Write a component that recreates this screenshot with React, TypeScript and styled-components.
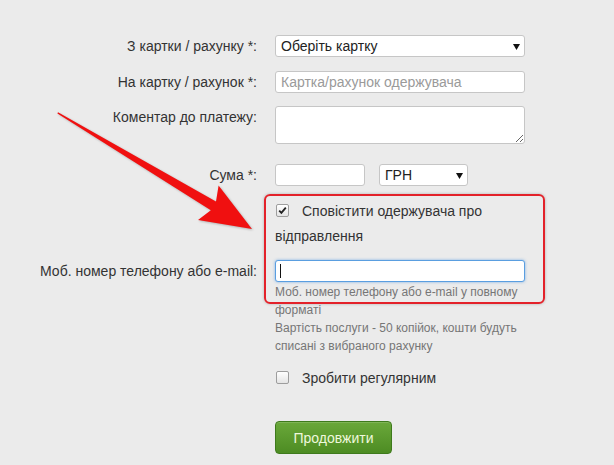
import React from "react";
import styled, { createGlobalStyle } from "styled-components";

const Global = createGlobalStyle`
  html, body { margin: 0; padding: 0; background: #ebebeb; }
  body { font-family: "Liberation Sans", Arial, sans-serif; }
`;

const Page = styled.div`
  position: relative;
  width: 614px;
  height: 465px;
  overflow: hidden;
  background: #ebebeb;
  padding-top: 35px;
  box-sizing: border-box;
  font-family: "Liberation Sans", Arial, sans-serif;
  color: #333;
`;

const Row = styled.div<{ $mt: number }>`
  display: grid;
  grid-template-columns: 257px 250px;
  column-gap: 18px;
  margin-top: ${(p) => p.$mt}px;
`;

const Label = styled.label`
  text-align: right;
  font-size: 14px;
  line-height: 22px;
  color: #333;
  white-space: nowrap;
`;

const Control = styled.div`
  display: flex;
  flex-direction: column;
`;

const Inline = styled.div`
  display: flex;
  gap: 14px;
`;

const SelectWrap = styled.div<{ $w: number }>`
  position: relative;
  width: ${(p) => p.$w}px;
`;

const Select = styled.select`
  appearance: none;
  -webkit-appearance: none;
  width: 100%;
  height: 22px;
  box-sizing: border-box;
  border: 1px solid #c6c6c6;
  border-radius: 3px;
  background: #fff;
  font-family: "Liberation Sans", Arial, sans-serif;
  font-size: 14px;
  color: #222;
  padding: 0 5px;
  outline: none;
`;

const Caret = styled.svg`
  position: absolute;
  right: 5px;
  top: 9px;
  pointer-events: none;
`;

const Input = styled.input<{ $w?: number; $focus?: boolean }>`
  width: ${(p) => (p.$w ? `${p.$w}px` : "100%")};
  height: 22px;
  box-sizing: border-box;
  border: 1px solid ${(p) => (p.$focus ? "#5a9ee0" : "#c6c6c6")};
  border-radius: 3px;
  background: #fff;
  font-family: "Liberation Sans", Arial, sans-serif;
  font-size: 14px;
  color: #222;
  padding: 0 5px;
  outline: none;
  box-shadow: ${(p) => (p.$focus ? "0 0 3px rgba(80,150,225,0.7)" : "none")};
  &::placeholder { color: #9a9a9a; }
`;

const TextArea = styled.textarea`
  width: 250px;
  height: 38px;
  box-sizing: border-box;
  border: 1px solid #c6c6c6;
  border-radius: 3px;
  background: #fff;
  font-family: "Liberation Sans", Arial, sans-serif;
  font-size: 14px;
  padding: 4px 5px;
  margin: 0;
  outline: none;
  display: block;
`;

const FieldWrap = styled.div`
  position: relative;
`;

const TextCursor = styled.span`
  position: absolute;
  left: 5px;
  top: 4px;
  width: 1px;
  height: 14px;
  background: #111;
`;

const Help = styled.div`
  font-size: 12px;
  line-height: 18px;
  color: #767676;
  margin-top: 1px;
`;

const CheckLabel = styled.label`
  font-size: 14px;
  line-height: 25px;
  color: #333;
`;

const Box = styled.span`
  display: inline-block;
  vertical-align: top;
  width: 11px;
  height: 11px;
  margin: 5px 13px 0 1px;
  border: 1px solid #9d9d9d;
  border-radius: 2px;
  background: linear-gradient(#ffffff, #e4e4e4);
  position: relative;
`;

const Button = styled.button`
  width: 117px;
  height: 33px;
  border: 1px solid #3e7a1c;
  border-radius: 4px;
  background: linear-gradient(#6aa83a, #4d8c23);
  color: #eef8dc;
  font-family: "Liberation Sans", Arial, sans-serif;
  font-size: 14px;
  padding: 0;
  box-shadow: inset 0 1px 0 rgba(255,255,255,0.15);
`;

const Highlight = styled.div`
  position: absolute;
  left: 264px;
  top: 194px;
  width: 281px;
  height: 110px;
  box-sizing: border-box;
  border: 2px solid #e3222a;
  border-radius: 6px;
  box-shadow: 0 0 3px rgba(0,0,0,0.25);
  pointer-events: none;
`;

const Arrow = styled.svg`
  position: absolute;
  left: 0;
  top: 0;
  pointer-events: none;
  filter: drop-shadow(1px 1px 1px rgba(0,0,0,0.25));
`;

function Check({ checked }: { checked?: boolean }) {
  return (
    <Box>
      {checked && (
        <svg width="11" height="11" viewBox="0 0 11 11" style={{ position: "absolute", left: 0, top: 0 }}>
          <path d="M2.2 5.6 L4.4 7.9 L8.8 2.6" fill="none" stroke="#222" strokeWidth="1.8" />
        </svg>
      )}
    </Box>
  );
}

function Triangle() {
  return (
    <Caret width="7" height="6" viewBox="0 0 7 6">
      <path d="M0 0 H7 L3.5 6 Z" fill="#111" />
    </Caret>
  );
}

export default function App() {
  return (
    <Page>
      <Global />
      <Row $mt={0}>
        <Label>З картки / рахунку *:</Label>
        <SelectWrap $w={250}>
          <Select defaultValue="0">
            <option value="0">Оберіть картку</option>
          </Select>
          <Triangle />
        </SelectWrap>
      </Row>
      <Row $mt={14}>
        <Label>На картку / рахунок *:</Label>
        <Input placeholder="Картка/рахунок одержувача" />
      </Row>
      <Row $mt={13}>
        <Label>Коментар до платежу:</Label>
        <TextArea />
      </Row>
      <Row $mt={20}>
        <Label>Сума *:</Label>
        <Inline>
          <Input $w={90} />
          <SelectWrap $w={89}>
            <Select defaultValue="uah">
              <option value="uah">ГРН</option>
            </Select>
            <Triangle />
          </SelectWrap>
        </Inline>
      </Row>
      <Row $mt={13}>
        <span />
        <CheckLabel>
          <Check checked />
          Сповістити одержувача про відправлення
        </CheckLabel>
      </Row>
      <Row $mt={11}>
        <Label>Моб. номер телефону або e-mail:</Label>
        <Control>
          <FieldWrap>
            <Input $focus />
            <TextCursor />
          </FieldWrap>
          <Help>
            Моб. номер телефону або e-mail у повному форматі
            <br />
            Вартість послуги - 50 копійок, кошти будуть списані з вибраного рахунку
          </Help>
        </Control>
      </Row>
      <Row $mt={11}>
        <span />
        <CheckLabel>
          <Check />
          Зробити регулярним
        </CheckLabel>
      </Row>
      <Row $mt={30}>
        <span />
        <div>
          <Button>Продовжити</Button>
        </div>
      </Row>
      <Highlight />
      <Arrow width="614" height="465" viewBox="0 0 614 465">
        <polygon
          points="58,112.3 216,201.6 218.6,185.6 252,229 198,220 210.8,210.2 57.4,113.6"
          fill="#f01010"
        />
      </Arrow>
    </Page>
  );
}
